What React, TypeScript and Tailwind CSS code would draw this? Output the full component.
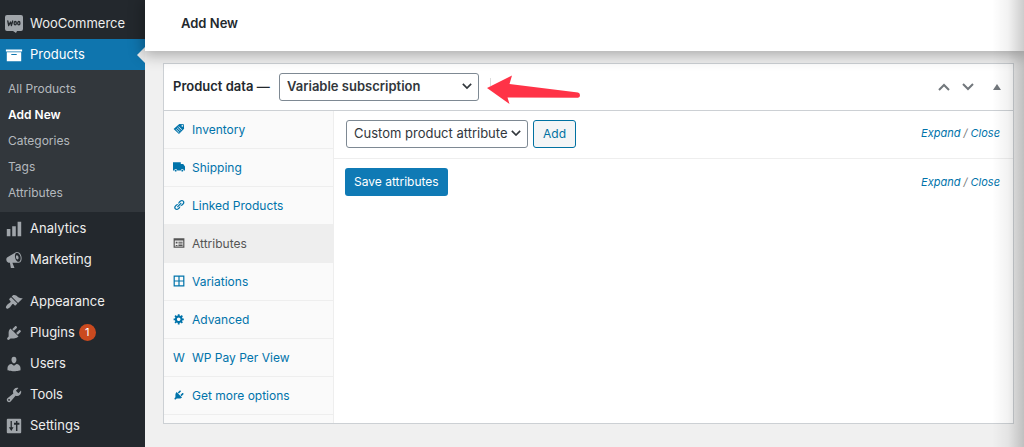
import type { ReactNode } from "react";
import clsx from "clsx";

const paths = {
  archive: "M19 4v2H1V4h18zM2 7h16v10H2V7zm11 3V9H7v1h6z",
  chart: "M18 18V2h-4v16h4zm-6 0V7H8v11h4zm-6 0v-8H2v8h4z",
  megaphone:
    "M18.15 5.94c.46 1.62.38 3.22-.02 4.48-.42 1.28-1.26 2.18-2.3 2.48-.16.06-.26.06-.4.06-.06.02-.12.02-.18.02-.06.02-.14.02-.22.02h-6.8l2.22 5.5c.02.14-.06.26-.14.34-.08.1-.24.16-.34.16H6.95c-.1 0-.26-.06-.34-.16-.08-.08-.16-.2-.14-.34l-1-5.5H4.25l-.02-.02c-.5.06-1.08-.18-1.54-.62s-.88-1.08-1.06-1.88c-.24-.8-.2-1.56-.02-2.2.18-.62.58-1.08 1.06-1.3l.02-.02 9-5.4c.1-.06.18-.1.24-.16.06-.04.14-.08.24-.12.16-.08.28-.12.5-.18 1.04-.3 2.24.1 3.22.98s1.84 2.24 2.26 3.86zm-2.58 5.98h-.02c.4-.1.74-.34 1.04-.7.58-.7.86-1.76.86-3.04 0-.64-.1-1.3-.28-1.98-.34-1.36-1.02-2.5-1.78-3.24s-1.68-1.1-2.46-.88c-.82.22-1.4.96-1.7 2-.32 1.04-.28 2.36.06 3.72.38 1.36 1 2.5 1.8 3.24.78.74 1.62 1.1 2.48.88zm-2.54-7.08c.22-.04.42-.02.62.04.38.16.76.48 1.02 1s.42 1.2.42 1.78c0 .3-.04.56-.12.8-.18.48-.44.84-.86.94-.34.1-.8-.06-1.14-.4s-.64-.86-.78-1.5c-.18-.62-.12-1.24.02-1.72s.48-.84.82-.94z",
  brush:
    "M14.48 11.06L7.41 3.99l1.5-1.5c.5-.56 2.3-.47 3.51.32 1.21.8 1.43 1.28 2.91 2.1 1.18.64 2.45 1.26 4.45.85zm-.71.71L6.7 4.7 4.93 6.47c-.39.39-.39 1.02 0 1.41l1.06 1.06c.39.39.39 1.03 0 1.42-.6.6-1.43 1.11-2.21 1.69-.35.26-.7.53-1.01.84C1.43 14.23.4 16.08 1.4 17.07c.99 1 2.84-.03 4.18-1.36.31-.31.58-.66.85-1.02.57-.78 1.08-1.61 1.69-2.21.39-.39 1.02-.39 1.41 0l1.06 1.06c.39.39 1.02.39 1.41 0z",
  plug: "M13.11 4.36L9.87 7.6 8 5.73l3.24-3.24c.35-.34 1.05-.2 1.56.32.52.51.66 1.21.31 1.55zm-8 1.77l.91-1.12 9.01 9.01-1.19.84c-.71.71-2.63 1.16-3.82 1.16H6.14L4.9 17.26c-.59.59-1.54.59-2.12 0-.59-.58-.59-1.53 0-2.12l1.24-1.24v-3.88c0-1.13.4-3.19 1.09-3.89zm7.26 3.97l3.24-3.24c.34-.35 1.04-.21 1.55.31.52.51.66 1.21.31 1.55l-3.24 3.25z",
  user: "M10 9.25c-2.27 0-2.73-3.44-2.73-3.44C7 4.02 7.82 2 9.97 2c2.16 0 2.98 2.02 2.71 3.81 0 0-.41 3.44-2.68 3.44zm0 2.57L12.72 10c2.39 0 4.52 2.33 4.52 4.53v2.49s-3.65 1.13-7.24 1.13c-3.65 0-7.24-1.13-7.24-1.13v-2.49c0-2.25 1.94-4.48 4.47-4.48z",
  wrench:
    "M16.68 9.77c-1.34 1.34-3.3 1.67-4.95.99l-5.41 6.52c-.99.99-2.59.99-3.58 0s-.99-2.59 0-3.57l6.52-5.42c-.68-1.65-.35-3.61.99-4.95 1.28-1.28 3.12-1.62 4.72-1.06l-2.89 2.89 2.82 2.82 2.86-2.87c.53 1.58.18 3.39-1.08 4.65zM3.81 16.21c.4.39 1.04.39 1.43 0 .4-.4.4-1.04 0-1.43-.39-.4-1.03-.4-1.43 0-.39.39-.39 1.03 0 1.43z",
  sliders:
    "M18 17V3c0-.6-.4-1-1-1H3c-.6 0-1 .4-1 1v14c0 .6.4 1 1 1h14c.6 0 1-.4 1-1zM7.6 4.5v7h1.9L7 15.5l-2.7-4h1.9v-7zM12.2 15.5v-7H10v-2h2.2v-2h1.6v2H16v2h-2.2v7z",
  tag: "M10.5 1.5L18 2l.5 7.5-8.5 9-9-8.5zM15.5 3.5a1.3 1.3 0 1 0 0 2.6 1.3 1.3 0 0 0 0-2.6zM9.5 5.5l-.7.7 5.5 5.5.7-.7zM7.3 7.7l-.7.7 5.5 5.5.7-.7zM5.1 9.9l-.7.7 5.5 5.5.7-.7z",
  truck:
    "M0 2h13v3h4l3 4v7h-2a2.5 2.5 0 0 0-5 0H7a2.5 2.5 0 0 0-5 0H0zM4.5 14.5a1.6 1.6 0 1 1 0 3.2 1.6 1.6 0 0 1 0-3.2zM15.5 14.5a1.6 1.6 0 1 1 0 3.2 1.6 1.6 0 0 1 0-3.2z",
  link: "M17.74 2.76c1.68 1.69 1.68 4.41 0 6.1l-1.53 1.52c-1.12 1.12-2.7 1.47-4.14 1.09l2.62-2.61.76-.77.76-.76c.84-.84.84-2.2 0-3.04-.84-.85-2.2-.85-3.04 0l-.77.76-3.38 3.38c-.37-1.44-.02-3.02 1.1-4.14l1.52-1.53c1.69-1.68 4.42-1.68 6.1 0zM8.59 13.43l5.34-5.34c.42-.42.42-1.1 0-1.52-.44-.43-1.13-.39-1.53 0l-5.33 5.34c-.42.42-.42 1.1 0 1.52.44.43 1.13.39 1.52 0zm-.76 2.29l4.14-4.15c.38 1.44.03 3.02-1.09 4.14l-1.52 1.53c-1.69 1.68-4.41 1.68-6.1 0-1.68-1.68-1.68-4.42 0-6.1l1.53-1.52c1.12-1.12 2.7-1.47 4.14-1.1l-4.14 4.15c-.85.84-.85 2.2 0 3.05.84.84 2.2.84 3.04 0z",
  card: "M1 2h18v16H1zM3 6v10h14V6zM4.5 8h3v3h-3zM9 8h7v1.6H9zM9 10.7h7v1.6H9zM4.5 13.4h3V15h-3zM9 13.4h7V15H9z",
  grid: "M1 1h18v18H1zM3 3v6h6V3zM11 3v6h6V3zM3 11v6h6v-6zM11 11v6h6v-6z",
  gear: "M18 12h-2.18c-.17.7-.44 1.35-.81 1.93l1.54 1.54-2.1 2.1-1.54-1.54c-.58.36-1.23.63-1.91.79V19H8v-2.18c-.68-.16-1.33-.43-1.91-.79l-1.54 1.54-2.12-2.12 1.54-1.54c-.36-.58-.63-1.23-.79-1.91H1V9.03h2.17c.16-.7.44-1.35.8-1.94L2.43 5.55l2.1-2.1 1.54 1.54c.58-.37 1.24-.64 1.93-.81V2h3v2.18c.68.16 1.33.43 1.91.79l1.54-1.54 2.12 2.12-1.54 1.54c.36.59.64 1.24.8 1.94H18V12zm-8.5 1.5c1.66 0 3-1.34 3-3s-1.34-3-3-3-3 1.34-3 3 1.34 3 3 3z",
};

type IconName = keyof typeof paths;

const submenu = ["All Products", "Add New", "Categories", "Tags", "Attributes"];

const storeMenu: { label: string; icon: IconName }[] = [
  { label: "Analytics", icon: "chart" },
  { label: "Marketing", icon: "megaphone" },
];

const siteMenu: { label: string; icon: IconName; count?: number }[] = [
  { label: "Appearance", icon: "brush" },
  { label: "Plugins", icon: "plug", count: 1 },
  { label: "Users", icon: "user" },
  { label: "Tools", icon: "wrench" },
  { label: "Settings", icon: "sliders" },
];

const tabs: { label: string; icon?: IconName }[] = [
  { label: "Inventory", icon: "tag" },
  { label: "Shipping", icon: "truck" },
  { label: "Linked Products", icon: "link" },
  { label: "Attributes", icon: "card" },
  { label: "Variations", icon: "grid" },
  { label: "Advanced", icon: "gear" },
  { label: "WP Pay Per View" },
  { label: "Get more options", icon: "plug" },
];

function Icon({ name, className }: { name: IconName; className: string }) {
  return (
    <svg viewBox="0 0 20 20" fill="currentColor" fillRule="evenodd" className={className} aria-hidden="true">
      <path d={paths[name]} />
    </svg>
  );
}

function WooIcon() {
  return (
    <svg viewBox="0 0 18 18" className="size-[18px]" aria-hidden="true">
      <path d="M2 0h14a2 2 0 0 1 2 2v12a2 2 0 0 1-2 2h-4l-1 2-3-2H2a2 2 0 0 1-2-2V2a2 2 0 0 1 2-2z" fill="#a0a5aa" />
      <g fill="none" stroke="#23282d" strokeWidth="1.3" strokeLinecap="round" strokeLinejoin="round">
        <path d="M2.8 6l.9 4.5 1.8-3.5.9 3.5L7.7 6" />
        <ellipse cx="10.2" cy="8.2" rx="1.1" ry="1.7" />
        <ellipse cx="13.8" cy="8.2" rx="1.1" ry="1.7" />
      </g>
    </svg>
  );
}

function Chevron({ up, className }: { up?: boolean; className: string }) {
  return (
    <svg viewBox="0 0 12 8" fill="none" stroke="currentColor" strokeWidth="2" className={className} aria-hidden="true">
      <path d={up ? "M1 7l5-5 5 5" : "M1 1l5 5 5-5"} />
    </svg>
  );
}

function MenuLink({ icon, children }: { icon: ReactNode; children: ReactNode }) {
  return (
    <a href="#" className="flex h-[31px] items-center text-[13px] text-[#eeeeee]">
      <span className="flex w-[30px] shrink-0 pl-[5px] text-[#a0a5aa]">{icon}</span>
      {children}
    </a>
  );
}

function Sidebar() {
  return (
    <nav className="w-[145px] shrink-0 bg-[#23282d] pt-2">
      <MenuLink icon={<WooIcon />}>WooCommerce</MenuLink>
      <a href="#" className="relative flex h-[31px] items-center bg-[#0f75ae] text-[13px] text-white">
        <span className="flex w-[30px] shrink-0 pl-[5px]">
          <Icon name="archive" className="size-[18px]" />
        </span>
        Products
        <span className="absolute top-2 right-0 border-y-8 border-r-8 border-y-transparent border-r-[#ececec]" />
      </a>
      <ul className="bg-[#32373c] py-1.5">
        {submenu.map((label) => (
          <li key={label}>
            <a
              href="#"
              className={clsx(
                "flex h-[26px] items-center pl-2 text-xs",
                label === "Add New" ? "font-semibold text-white" : "text-[#b4b9be]"
              )}
            >
              {label}
            </a>
          </li>
        ))}
      </ul>
      <div className="pt-px">
        {storeMenu.map((item) => (
          <MenuLink key={item.label} icon={<Icon name={item.icon} className="size-[18px]" />}>
            {item.label}
          </MenuLink>
        ))}
      </div>
      <div className="mt-[11px]">
        {siteMenu.map((item) => (
          <MenuLink key={item.label} icon={<Icon name={item.icon} className="size-[18px]" />}>
            {item.label}
            {item.count && (
              <span className="ml-1 flex size-[17px] items-center justify-center rounded-full bg-[#ca4a1f] text-[11px] text-white">
                {item.count}
              </span>
            )}
          </MenuLink>
        ))}
      </div>
    </nav>
  );
}

function SelectBox({ id, label, option, className }: { id: string; label: string; option: string; className: string }) {
  return (
    <div className={clsx("relative text-[13px] text-[#32373c]", className)}>
      <select
        id={id}
        aria-label={label}
        className="h-7 w-full appearance-none rounded-[3px] border border-[#7e8993] bg-white pr-4 pl-[7px]"
      >
        <option>{option}</option>
      </select>
      <Chevron className="pointer-events-none absolute top-2.5 right-[7px] w-2.5" />
    </div>
  );
}

function ExpandClose() {
  return (
    <span className="ml-auto text-[11px] text-[#777777] italic">
      <a href="#" className="text-[#0073aa]">Expand</a> / <a href="#" className="text-[#0073aa]">Close</a>
    </span>
  );
}

function Arrow() {
  return (
    <svg viewBox="0 0 94 34" className="ml-2 h-[34px] w-[94px] shrink-0" aria-hidden="true">
      <path d="M3.5 8v8" stroke="#dddddd" />
      <path d="M0 18L25 5.5l-2.500 8.500L91 22.500q2 .5 2 2.700t-2 2.500L20.500 27.500l2 6.500z" fill="#ff3347" />
    </svg>
  );
}

function ProductData() {
  return (
    <section className="border border-[#ccd0d4] bg-white">
      <header className="flex h-[47px] items-center border-b border-[#ccd0d4] pr-3 pl-[9px] text-[13px] font-semibold text-[#23282d]">
        <h2 className="w-[106px] shrink-0">Product data —</h2>
        <SelectBox id="product-type" label="Product type" option="Variable subscription" className="w-[200px]" />
        <Arrow />
        <div className="ml-auto flex items-center text-[#72777c]">
          <button type="button" aria-label="Move up">
            <Chevron up className="w-3" />
          </button>
          <button type="button" aria-label="Move down" className="ml-3">
            <Chevron className="w-3" />
          </button>
          <button type="button" aria-label="Toggle panel" className="ml-[19px]">
            <svg viewBox="0 0 8 6" className="w-2" fill="currentColor" aria-hidden="true">
              <path d="M4 0l4 6H0z" />
            </svg>
          </button>
        </div>
      </header>
      <div className="flex">
        <ul className="w-[170px] shrink-0 border-r border-[#eeeeee] bg-[#fafafa] pb-2">
          {tabs.map((tab) => (
            <li key={tab.label} className="border-b border-[#eeeeee]">
              <a
                href="#"
                className={clsx(
                  "flex h-[37px] items-center pl-[9px] text-xs",
                  tab.label === "Attributes" ? "bg-[#eeeeee] text-[#555555]" : "text-[#0073aa]"
                )}
              >
                <span className="w-[19px] shrink-0">
                  {tab.icon ? <Icon name={tab.icon} className="mb-0.5 size-3" /> : "W"}
                </span>
                {tab.label}
              </a>
            </li>
          ))}
        </ul>
        <div className="grow text-xs">
          <div className="flex h-12 items-center border-b border-[#eeeeee] pr-[13px] pb-0.5 pl-3">
            <SelectBox id="attribute" label="Attribute" option="Custom product attribute" className="w-[182px]" />
            <button
              type="button"
              className="ml-[5px] h-7 rounded-[3px] border border-[#0071a1] bg-[#f3f5f6] px-[9px] text-[#0071a1]"
            >
              Add
            </button>
            <ExpandClose />
          </div>
          <div className="flex h-12 items-center pr-[13px] pb-0.5 pl-[11px]">
            <button type="button" className="h-7 rounded-[3px] bg-[#0f7ab5] px-[9px] text-white">
              Save attributes
            </button>
            <ExpandClose />
          </div>
        </div>
      </div>
    </section>
  );
}

export default function App() {
  return (
    <div className="relative flex min-h-screen overflow-hidden bg-[#f0f0f0] font-['Inter',sans-serif]">
      <Sidebar />
      <main className="min-w-0 grow">
        <header className="relative flex h-[51px] items-center bg-white pb-[3px] pl-9 shadow-[0_2px_14px_2px_rgba(0,0,0,0.3)]">
          <h1 className="text-[13px] font-semibold text-[#23282d]">Add New</h1>
        </header>
        <div className="pt-3 pr-[10px] pl-[18px]">
          <ProductData />
        </div>
      </main>
      <div className="pointer-events-none absolute inset-y-0 right-0 w-8 bg-linear-to-r from-transparent via-black/5 to-black/20" />
    </div>
  );
}
